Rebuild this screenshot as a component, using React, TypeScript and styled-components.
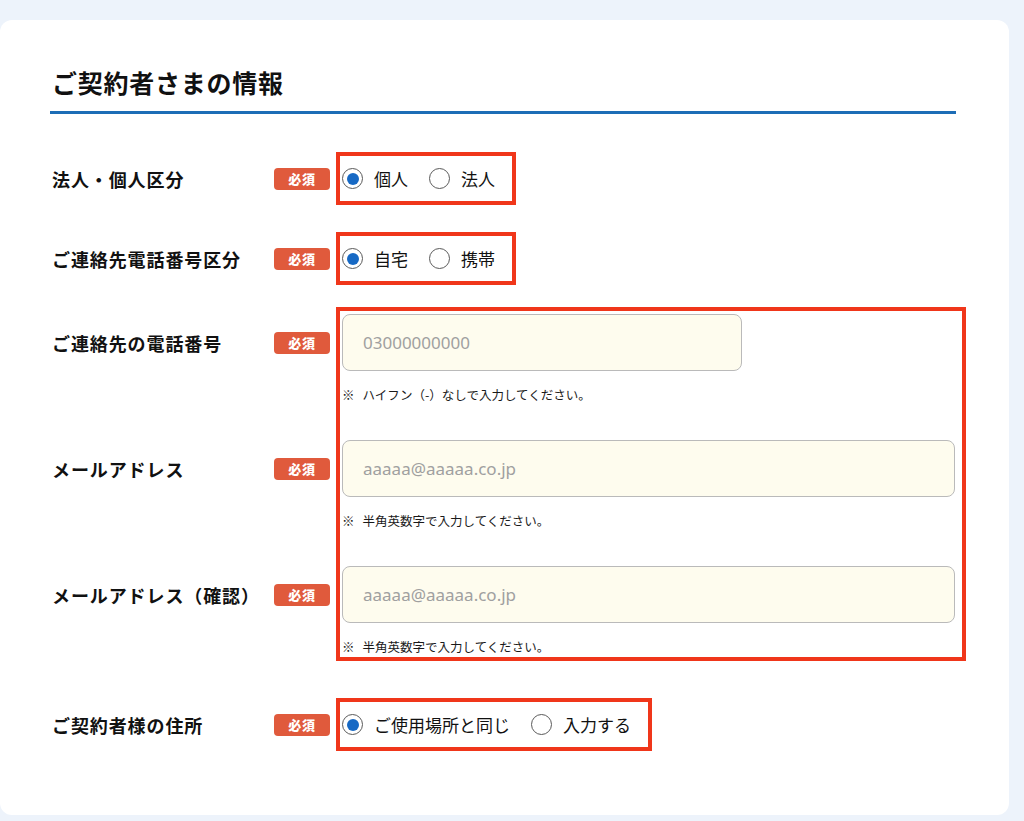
import React from 'react';
import styled, { createGlobalStyle } from 'styled-components';

const GlobalStyle = createGlobalStyle`
  html, body {
    margin: 0;
    padding: 0;
    background: #edf3fb;
    font-family: "Noto Sans CJK JP", "Noto Sans", sans-serif;
    color: #111111;
  }
`;

type RadioOption = { label: string; checked?: boolean };

type RadioRow = { label: string; options: RadioOption[]; top: number };

const rows: RadioRow[] = [
  { label: '法人・個人区分', options: [{ label: '個人', checked: true }, { label: '法人' }], top: 38 },
  { label: 'ご連絡先電話番号区分', options: [{ label: '自宅', checked: true }, { label: '携帯' }], top: 27 },
];

const fields = [
  { label: 'ご連絡先の電話番号', placeholder: '03000000000', note: 'ハイフン（-）なしで入力してください。', width: '400px' },
  { label: 'メールアドレス', placeholder: 'aaaaa@aaaaa.co.jp', note: '半角英数字で入力してください。', width: '100%' },
  { label: 'メールアドレス（確認）', placeholder: 'aaaaa@aaaaa.co.jp', note: '半角英数字で入力してください。', width: '100%' },
];

const Radio: React.FC<RadioOption> = ({ label, checked }) => (
  <Option>
    <Circle $checked={!!checked} />
    <span>{label}</span>
  </Option>
);

const LabelWithBadge: React.FC<{ label: string; $h?: number }> = ({ label, $h }) => (
  <LabelCell $h={$h}>
    <Label>{label}</Label>
    <Badge>必須</Badge>
  </LabelCell>
);

export default function App() {
  return (
    <>
      <GlobalStyle />
      <Page>
        <Card>
          <Title>ご契約者さまの情報</Title>
          {rows.map((row) => (
            <Section key={row.label} $top={row.top}>
              <LabelWithBadge label={row.label} />
              <Highlight $kind="radio">
                <RadioGroup>
                  {row.options.map((o) => (
                    <Radio key={o.label} {...o} />
                  ))}
                </RadioGroup>
              </Highlight>
            </Section>
          ))}

          <Section $top={22} $align="flex-start">
            <LabelStack>
              {fields.map((f) => (
                <LabelWithBadge key={f.label} label={f.label} $h={57} />
              ))}
            </LabelStack>
            <Highlight $kind="fields">
              <FieldList>
                {fields.map((f) => (
                  <Field key={f.label}>
                    <TextInput readOnly placeholder={f.placeholder} style={{ width: f.width }} />
                    <Note>
                      <NoteMark>※</NoteMark>
                      {f.note}
                    </Note>
                  </Field>
                ))}
              </FieldList>
            </Highlight>
          </Section>

          <Section $top={37}>
            <LabelWithBadge label="ご契約者様の住所" />
            <Highlight $kind="radio">
              <RadioGroup>
                <Radio label="ご使用場所と同じ" checked />
                <Radio label="入力する" />
              </RadioGroup>
            </Highlight>
          </Section>
        </Card>
      </Page>
    </>
  );
}

const Page = styled.div`
  padding: 20px 15px 6px 0;
`;

const Card = styled.div`
  box-sizing: border-box;
  width: 1009px;
  height: 795px;
  background: #ffffff;
  border-radius: 12px;
  padding: 44px 53px 0 50px;
`;

const Title = styled.h2`
  margin: 0;
  padding: 0 0 11px 2px;
  font-size: 25px;
  line-height: 36px;
  font-weight: 700;
  letter-spacing: 0.03em;
  border-bottom: 3px solid #1d6db6;
`;

const Section = styled.div<{ $top: number; $align?: string }>`
  display: flex;
  align-items: ${({ $align }) => $align ?? 'center'};
  gap: 4px;
  margin-top: ${({ $top }) => $top}px;
`;

const LabelStack = styled.div`
  display: flex;
  flex-direction: column;
  gap: 69px;
  padding-top: 7px;
`;

const LabelCell = styled.div<{ $h?: number }>`
  display: flex;
  align-items: center;
  width: 282px;
  height: ${({ $h }) => ($h ? `${$h}px` : 'auto')};
`;

const Label = styled.div`
  flex: 0 0 224px;
  padding-left: 2px;
  box-sizing: border-box;
  font-size: 18px;
  font-weight: 700;
  letter-spacing: 0.05em;
`;

const Badge = styled.span`
  display: inline-flex;
  align-items: center;
  justify-content: center;
  width: 56px;
  height: 22px;
  border-radius: 4px;
  background: #e05a3c;
  color: #ffffff;
  font-size: 13px;
  font-weight: 900;
  letter-spacing: 0.05em;
`;

const Highlight = styled.div<{ $kind: 'radio' | 'fields' }>`
  border: 4px solid #f0361a;
  padding: ${({ $kind }) => ($kind === 'radio' ? '11px 17px 11px 2px' : '3px 7px 1px 2px')};
  flex: ${({ $kind }) => ($kind === 'radio' ? '0 0 auto' : '0 0 630px')};
  box-sizing: border-box;
`;

const RadioGroup = styled.div`
  display: flex;
  align-items: center;
  gap: 21px;
`;

const Option = styled.label`
  display: flex;
  align-items: center;
  gap: 11px;
  font-size: 17px;
  line-height: 23px;
`;

const Circle = styled.span<{ $checked: boolean }>`
  position: relative;
  box-sizing: border-box;
  width: 21px;
  height: 21px;
  border-radius: 50%;
  border: 1px solid #5a5a5a;
  background: #ffffff;

  &::after {
    content: '';
    display: ${({ $checked }) => ($checked ? 'block' : 'none')};
    position: absolute;
    left: 3.5px;
    top: 3.5px;
    width: 12px;
    height: 12px;
    border-radius: 50%;
    background: #1769c4;
  }
`;

const FieldList = styled.div`
  display: flex;
  flex-direction: column;
  gap: 36px;
`;

const Field = styled.div`
  display: flex;
  flex-direction: column;
`;

const TextInput = styled.input`
  box-sizing: border-box;
  height: 57px;
  padding: 0 20px;
  border: 1px solid #bababa;
  border-radius: 8px;
  background: #fefcee;
  font-family: "Noto Sans", "Noto Sans CJK JP", sans-serif;
  font-size: 17px;
  outline: none;

  &::placeholder {
    color: #a0a0a0;
  }
`;

const Note = styled.div`
  display: flex;
  margin-top: 15px;
  font-size: 12.5px;
  line-height: 18px;
  color: #1a1a1a;
`;

const NoteMark = styled.span`
  margin-right: 8px;
`;
